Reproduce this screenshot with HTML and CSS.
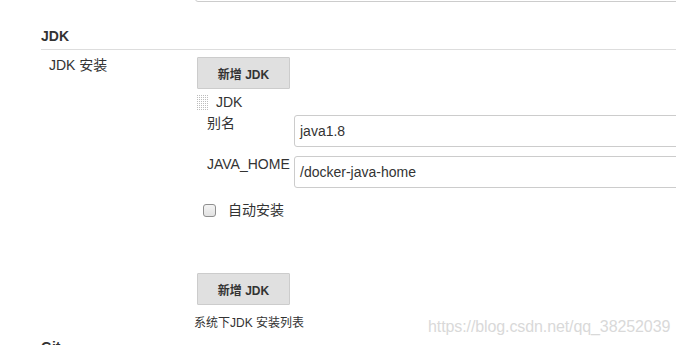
FILE: index.html
```html
<!DOCTYPE html>
<html lang="zh-CN">
<head>
<meta charset="utf-8">
<title>JDK</title>
<link rel="stylesheet" href="styles.css">
</head>
<body>
<div class="page">
  <div class="prev-field"></div>

  <section class="section">
    <h2 class="section-title">JDK</h2>
    <div class="setting">
      <div class="setting-name">JDK 安装</div>
      <div class="setting-main">
        <button class="btn" type="button">新增 JDK</button>

        <div class="repeated">
          <div class="repeated-head">
            <span class="grip"></span>
            <span class="repeated-title">JDK</span>
          </div>
          <div class="field">
            <label class="field-label">别名</label>
            <div class="field-input">java1.8</div>
          </div>
          <div class="field">
            <label class="field-label">JAVA_HOME</label>
            <div class="field-input">/docker-java-home</div>
          </div>
          <div class="check-row">
            <span class="checkbox"></span>
            <span class="check-label">自动安装</span>
          </div>
        </div>

        <button class="btn btn-bottom" type="button">新增 JDK</button>
        <div class="desc">系统下JDK 安装列表</div>
      </div>
    </div>
  </section>

  <section class="section next">
    <h2 class="section-title">Git</h2>
  </section>

  <div class="watermark">https://blog.csdn.net/qq_38252039</div>
</div>
</body>
</html>
```

FILE: styles.css
```css
html {
  overflow: hidden;
}

html, body {
  margin: 0;
  padding: 0;
  background: #fff;
}

body {
  font-family: "Liberation Sans", Arial, "Noto Sans CJK SC", sans-serif;
  color: #333;
  font-size: 14px;
  line-height: 17px;
}

.page {
  position: relative;
  display: flow-root;
  width: 676px;
  height: 345px;
  overflow: hidden;
}

.prev-field {
  margin-top: -30px;
  margin-left: 195px;
  margin-right: -10px;
  height: 30px;
  border: 1px solid #ccc;
  border-radius: 3px;
}

.section {
  margin-left: 41px;
}

.section-title {
  margin: 26px 0 0 0;
  padding-bottom: 4px;
  font-size: 14px;
  line-height: 17px;
  font-weight: bold;
  border-bottom: 1px solid #ddd;
  color: #333;
}

.setting {
  display: grid;
  grid-template-columns: 156px 1fr;
  padding-top: 7px;
}

.setting-name {
  padding-left: 8px;
  font-size: 14px;
  line-height: 17px;
}

.setting-main {
  display: flex;
  flex-direction: column;
  align-items: flex-start;
  margin-right: -20px;
}

.btn {
  width: 93px;
  height: 32px;
  margin: 0;
  padding: 0;
  border: 1px solid #ccc;
  border-radius: 1px;
  background: #e0e0e0;
  color: #333;
  font-family: "Liberation Sans", Arial, "Noto Sans CJK SC", sans-serif;
  font-size: 12px;
  font-weight: bold;
}

.repeated {
  align-self: stretch;
  margin-top: 5px;
}

.repeated-head {
  display: flex;
  align-items: flex-start;
  gap: 8px;
  height: 17px;
}

.grip {
  width: 11px;
  height: 15px;
  margin-top: 1px;
  background-color: #fff;
  background-image:
    linear-gradient(90deg, transparent 1px, #fff 1px),
    linear-gradient(#bdbdbd 1px, transparent 1px);
  background-size: 2px 2px;
}

.repeated-title {
  font-size: 14px;
  line-height: 17px;
}

.field {
  display: flex;
  align-items: flex-start;
  padding-left: 10px;
  margin-top: 4px;
}

.field + .field {
  margin-top: 9px;
}

.field-label {
  width: 87px;
  flex: none;
  font-size: 14px;
  line-height: 17px;
}

.field-input {
  flex: 1;
  height: 30px;
  border: 1px solid #ccc;
  border-radius: 3px;
  padding: 0 5px;
  font-size: 14px;
  line-height: 30px;
  color: #333;
}

.check-row {
  display: flex;
  align-items: center;
  gap: 12px;
  padding-left: 6px;
  margin-top: 15px;
  height: 14px;
}

.checkbox {
  width: 11px;
  height: 11px;
  border: 1px solid #8f8f8f;
  border-radius: 3px;
  background: linear-gradient(#f4f4f4, #e2e2e2);
}

.check-label {
  font-size: 14px;
  line-height: 17px;
}

.btn-bottom {
  margin-top: 56px;
}

.desc {
  margin-top: 11px;
  margin-left: -3px;
  font-size: 12px;
  line-height: 15px;
}

.next .section-title {
  margin-top: 8px;
}

.watermark {
  position: absolute;
  left: 428px;
  top: 317px;
  font-size: 16px;
  line-height: 19px;
  color: #d9d9d9;
  letter-spacing: -0.1px;
  white-space: nowrap;
}
```
